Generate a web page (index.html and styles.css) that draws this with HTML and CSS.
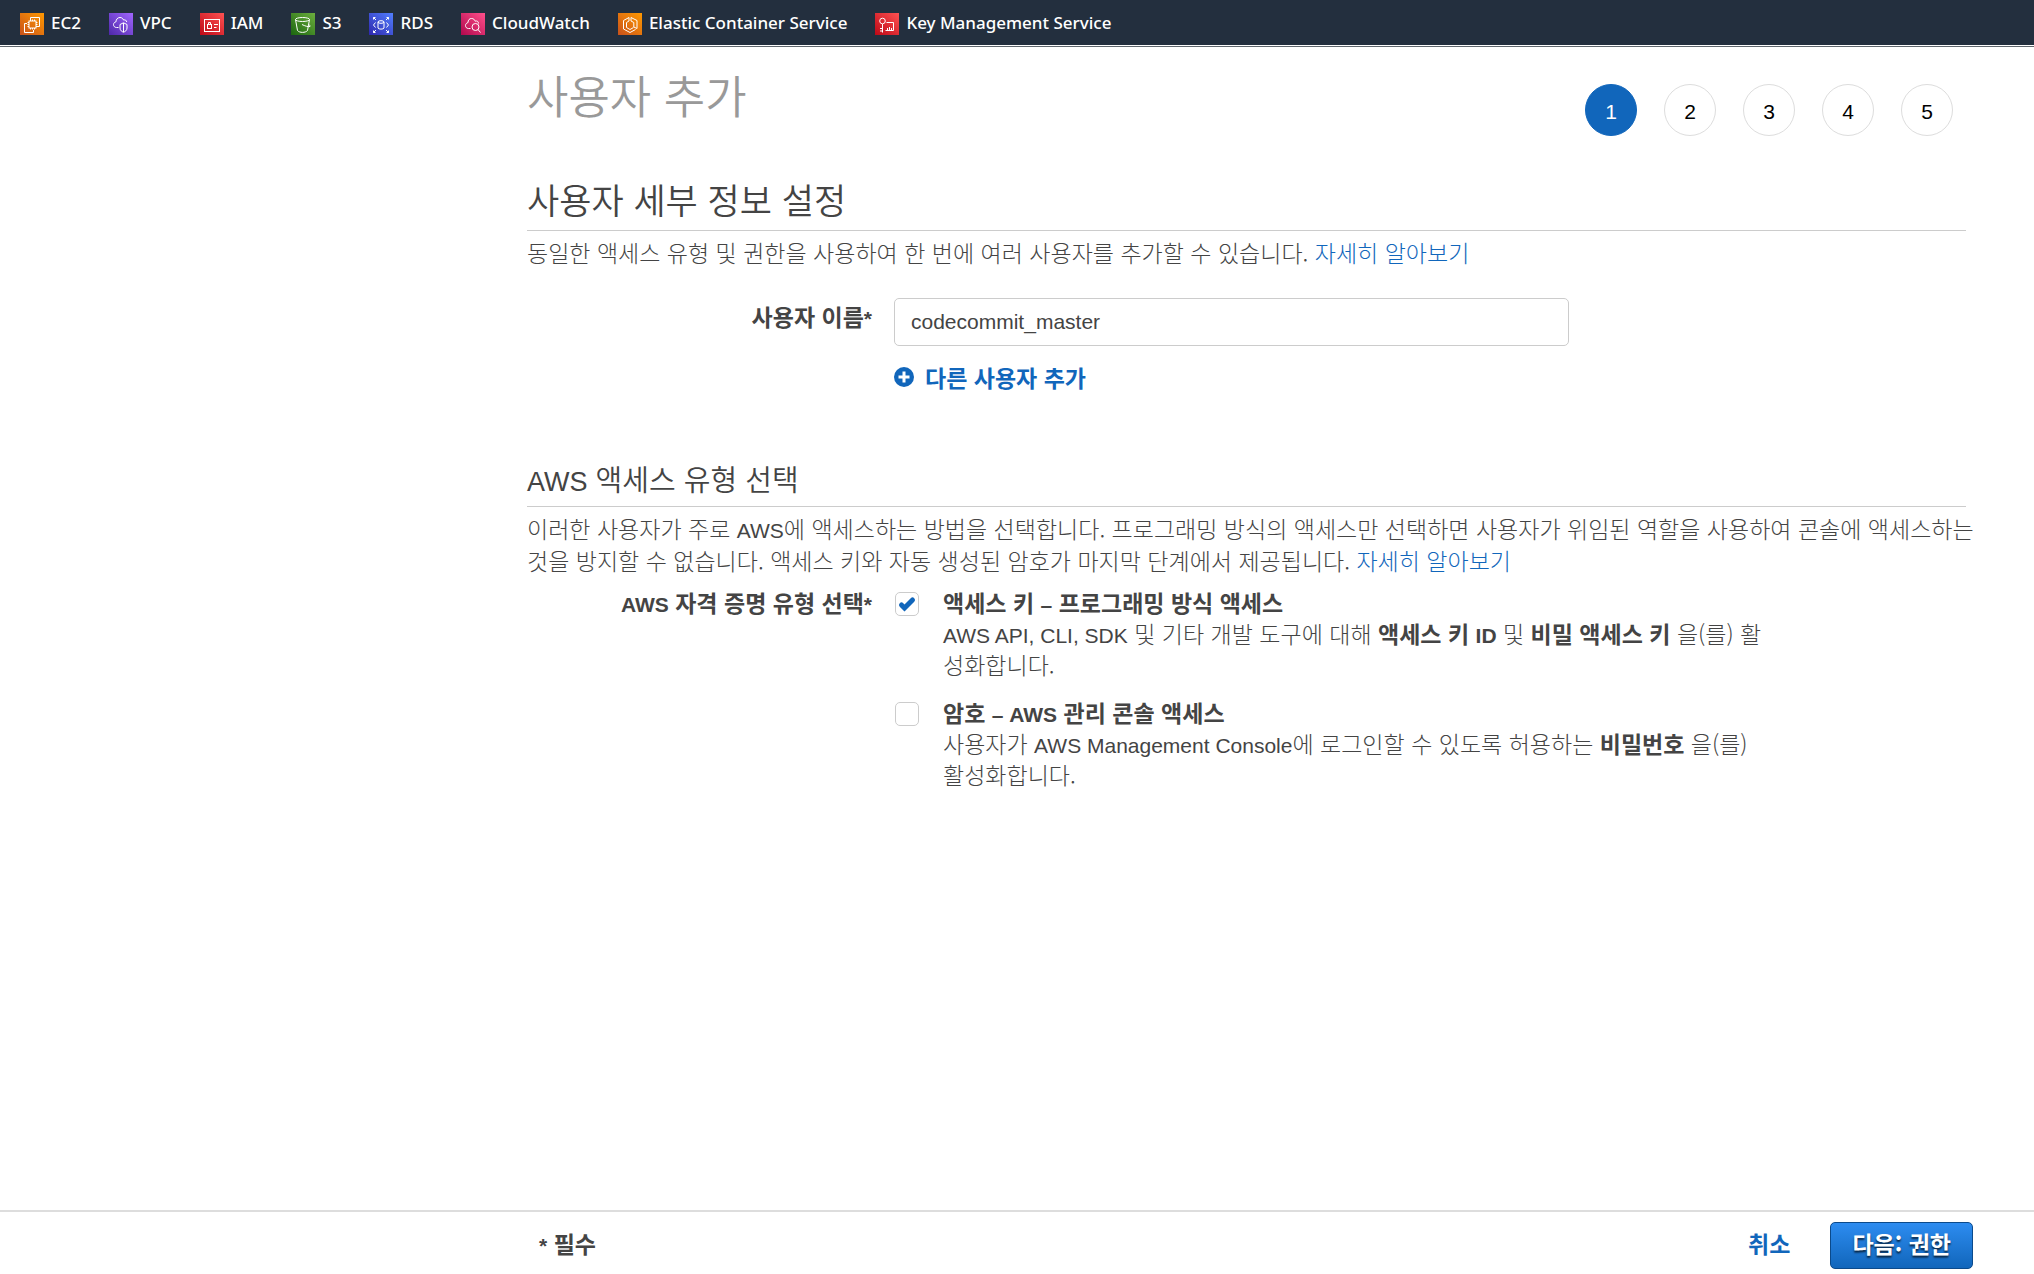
FILE: index.html
```html
<!DOCTYPE html>
<html lang="ko">
<head>
<meta charset="utf-8">
<meta name="viewport" content="width=device-width, initial-scale=1">
<title>IAM - 사용자 추가</title>
<link rel="stylesheet" href="styles.css">
</head>
<body>
<svg class="defs" width="0" height="0" aria-hidden="true">
  <defs>
    <linearGradient id="orange" x1="0" y1="1" x2="1" y2="0"><stop offset="0" stop-color="#c8511b"/><stop offset="1" stop-color="#ff9900"/></linearGradient>
    <linearGradient id="purple" x1="0" y1="1" x2="1" y2="0"><stop offset="0" stop-color="#4d27a8"/><stop offset="1" stop-color="#a166ff"/></linearGradient>
    <linearGradient id="red" x1="0" y1="1" x2="1" y2="0"><stop offset="0" stop-color="#bd0816"/><stop offset="1" stop-color="#ff5252"/></linearGradient>
    <linearGradient id="green" x1="0" y1="1" x2="1" y2="0"><stop offset="0" stop-color="#1b660f"/><stop offset="1" stop-color="#6cae3e"/></linearGradient>
    <linearGradient id="blue" x1="0" y1="1" x2="1" y2="0"><stop offset="0" stop-color="#2e27ad"/><stop offset="1" stop-color="#527fff"/></linearGradient>
    <linearGradient id="pink" x1="0" y1="1" x2="1" y2="0"><stop offset="0" stop-color="#b0084d"/><stop offset="1" stop-color="#ff4f8b"/></linearGradient>
  </defs>
</svg>
<nav class="favorites" aria-label="즐겨찾기">
  <a href="#ec2"><svg class="icon" viewBox="0 0 24 22"><rect class="tile" width="24" height="22" fill="url(#orange)"/><path d="M10.500 7V4.500H19.500V13.500H17M7 10.500H4.500V19.500H13.500V17"/><rect x="9" y="8" width="7" height="7"/><path d="M10.500 8V6.500M12.500 8V6.500M14.500 8V6.500M10.500 15V16.500M12.500 15V16.500M14.500 15V16.500M9 9.500H7.500M9 11.500H7.500M9 13.500H7.500M16 9.500H17.500M16 11.500H17.500M16 13.500H17.500"/></svg>EC2</a>
  <a href="#vpc"><svg class="icon" viewBox="0 0 24 22"><rect class="tile" width="24" height="22" fill="url(#purple)"/><path d="M9.500 14.500H7.500C5.500 14.500 4.500 13 4.500 11.700C4.500 10 5.800 9 7 8.800C7 6.500 8.500 4.500 11 4.500C12.800 4.500 14 5.500 14.500 7C16.500 6.500 17.500 7.500 17.700 9M11 11.500L14.500 9.800L18 11.500V15C18 17.500 16 18.700 14.500 19.200C13 18.700 11 17.500 11 15ZM14.500 10V19"/></svg>VPC</a>
  <a href="#iam"><svg class="icon" viewBox="0 0 24 22"><rect class="tile" width="24" height="22" fill="url(#red)"/><rect x="4.500" y="6.500" width="15" height="12"/><rect x="7.500" y="11.500" width="4" height="4"/><path d="M8.500 11.500V9.500H10.500V11.500M14 11.500H18M14 14.500H16.500"/></svg>IAM</a>
  <a href="#s3"><svg class="icon" viewBox="0 0 24 22"><rect class="tile" width="24" height="22" fill="url(#green)"/><ellipse cx="11.500" cy="6.500" rx="7" ry="2"/><path d="M4.500 6.500L6.500 17.500C8.500 20 14.500 20 16.500 17.500L18.500 6.500M11 11.500C14 13 17 14 19 13.500C19.500 12.500 18.500 12 17.500 11.500"/></svg>S3</a>
  <a href="#rds"><svg class="icon" viewBox="0 0 24 22"><rect class="tile" width="24" height="22" fill="url(#blue)"/><ellipse cx="12" cy="9" rx="3" ry="1.300"/><path d="M9 9V15C9.500 16.500 14.500 16.500 15 15V9M4.500 6.500V4.500H6.500M4.500 4.500L7 7M17.500 4.500H19.500V6.500M19.500 4.500L17 7M4.500 17.500V19.500H6.500M4.500 19.500L7 17M17.500 19.500H19.500V17.500M19.500 19.500L17 17M6.500 9.500L4.500 12L6.500 14.500M17.500 9.500L19.500 12L17.500 14.500"/></svg>RDS</a>
  <a href="#cloudwatch"><svg class="icon" viewBox="0 0 24 22"><rect class="tile" width="24" height="22" fill="url(#pink)"/><path d="M9.500 15.500H7.500C5.500 15.500 4.500 14 4.500 12.500C4.500 11 5.800 9.800 7 9.600C7 7 8.500 5.500 10.500 5.500C12.500 5.500 13.500 6.500 14.200 8.200C16 7.500 17.500 8.500 17.500 10.500M17 16.500L19.500 19.500"/><circle cx="14.500" cy="14" r="3.500"/></svg>CloudWatch</a>
  <a href="#ecs"><svg class="icon" viewBox="0 0 24 22"><rect class="tile" width="24" height="22" fill="url(#orange)"/><path d="M11 4.500L5.500 7.500V16L12 19.500L17.500 16.500M13 4.500L19 7.500V15.500L15.800 14V9.500L13 8V4.500M11 4.500V8L8.500 9.500V14.500L12 16.500L15.500 14.500"/></svg>Elastic Container Service</a>
  <a href="#kms"><svg class="icon" viewBox="0 0 24 22"><rect class="tile" width="24" height="22" fill="url(#red)"/><circle cx="7.500" cy="8" r="2.800"/><path d="M7.500 11V19.500M7.500 15.500H5M7.500 18H5M11.500 9.500H18.500V17.500H10.500M12.500 17V15M14.500 17V14M16.500 17V15"/></svg>Key Management Service</a>
</nav>

<main class="wizard">
  <header class="wizard-head">
    <h1>사용자 추가</h1>
    <ol class="steps">
      <li class="current" aria-current="step">1</li><li>2</li><li>3</li><li>4</li><li>5</li>
    </ol>
  </header>

  <section class="details">
    <h2>사용자 세부 정보 설정</h2>
    <p class="intro">동일한 액세스 유형 및 권한을 사용하여 한 번에 여러 사용자를 추가할 수 있습니다. <a href="#learn-users">자세히 알아보기</a></p>
    <div class="field username">
      <label class="field-label" for="username">사용자 이름<span class="en">*</span></label>
      <div class="field-body">
        <input class="text-input" id="username" type="text" value="codecommit_master">
        <button class="add-user" type="button"><svg class="plus" viewBox="0 0 20 20" aria-hidden="true"><circle cx="10" cy="10" r="10"/><path d="M10 4.500V15.500M4.500 10H15.500"/></svg>다른 사용자 추가</button>
      </div>
    </div>
  </section>

  <section class="access">
    <h3><span class="en">AWS</span> 액세스 유형 선택</h3>
    <p class="intro">이러한 사용자가 주로 <span class="en">AWS</span>에 액세스하는 방법을 선택합니다. 프로그래밍 방식의 액세스만 선택하면 사용자가 위임된 역할을 사용하여 콘솔에 액세스하는 것을 방지할 수 없습니다. 액세스 키와 자동 생성된 암호가 마지막 단계에서 제공됩니다. <a href="#learn-access">자세히 알아보기</a></p>
    <div class="field choices" role="group" aria-labelledby="credential-label">
      <div class="field-label" id="credential-label"><span class="en">AWS</span> 자격 증명 유형 선택<span class="en">*</span></div>
      <div class="field-body">
        <div class="choice">
          <input type="checkbox" id="access-key" checked>
          <div>
            <label for="access-key">액세스 키 <span class="en">–</span> 프로그래밍 방식 액세스</label>
            <p><span class="en">AWS API, CLI, SDK</span> 및 기타 개발 도구에 대해 <b>액세스 키 <span class="en">ID</span></b> 및 <b>비밀 액세스 키</b> 을(를) 활성화합니다.</p>
          </div>
        </div>
        <div class="choice">
          <input type="checkbox" id="password">
          <div>
            <label for="password">암호 <span class="en">– AWS</span> 관리 콘솔 액세스</label>
            <p>사용자가 <span class="en">AWS Management Console</span>에 로그인할 수 있도록 허용하는 <b>비밀번호</b> 을(를) 활성화합니다.</p>
          </div>
        </div>
      </div>
    </div>
  </section>
</main>

<footer class="actions">
  <span class="required"><span class="en">*</span> 필수</span>
  <button class="cancel" type="button">취소</button>
  <button class="next" type="button">다음: 권한</button>
</footer>
</body>
</html>
```
FILE: styles.css
```css
* { box-sizing: border-box; }

body {
  margin: 0;
  min-height: 100vh;
  display: flex;
  flex-direction: column;
  background: #fff;
  color: #444;
  font: 300 23px/32px "Noto Sans CJK KR", sans-serif;
}

h1, h2, h3, p, ol { margin: 0; padding: 0; font-weight: inherit; }
a { color: #1166bb; text-decoration: none; }
button { border: 0; padding: 0; background: none; color: #1166bb; font: inherit; font-weight: 700; cursor: pointer; }
b { font-weight: 700; }
.defs { position: absolute; }
.en { font-family: "Liberation Sans", sans-serif; font-size: 21px; line-height: 1; }

.favorites {
  display: flex;
  gap: 28px;
  height: 45px;
  padding: 1px 20px 0;
  background: #232f3e;
  box-shadow: 0 1px 0 #fff, 0 2px 0 #5f666d;
}
.favorites a {
  display: flex;
  align-items: center;
  gap: 7px;
  color: #fff;
  font: 500 17px/44px "Noto Sans", sans-serif;
  white-space: nowrap;
}
.icon { width: 24px; height: 22px; margin-top: 2px; fill: none; stroke: #fff; stroke-width: 1; }
.tile { stroke: none; }

.wizard { flex: 1; width: 100%; padding: 28px 68px 0 527px; }
.wizard-head { display: flex; justify-content: space-between; }
h1 { color: #999; font-size: 45px; line-height: 44px; font-weight: 350; }
.steps { display: flex; gap: 27px; padding: 11px 13px 0 0; list-style: none; }
.steps li {
  width: 52px;
  height: 52px;
  border: 1px solid #ddd;
  border-radius: 50%;
  color: #000;
  font: 21px/54px "Liberation Sans", sans-serif;
  text-align: center;
}
.steps .current { background: #1166bb; border-color: #1166bb; color: #fff; }

h2, h3 { border-bottom: 1px solid #ccc; font-weight: 350; }
h2 { margin-top: 36px; padding: 6px 0 10px; font-size: 35px; line-height: 42px; }
h3 { padding-bottom: 10px; font-size: 29px; line-height: 36px; }
h3 .en { font-size: 27px; }
.intro { margin-right: -14px; padding: 5px 0 2px; }

.field { display: grid; grid-template-columns: 345px minmax(0, 1fr); column-gap: 22px; }
.field-label { font-weight: 700; text-align: right; }
.username { padding-top: 28px; }
.username .field-label { padding-top: 2px; }
.text-input {
  display: block;
  width: 100%;
  max-width: 675px;
  height: 48px;
  padding: 0 16px;
  border: 1px solid #ccc;
  border-radius: 5px;
  color: #444;
  font: 21px "Liberation Sans", sans-serif;
}
.add-user { display: flex; align-items: center; gap: 11px; margin-top: 15px; }
.plus { width: 20px; height: 20px; fill: #1166bb; }
.plus path { stroke: #fff; stroke-width: 3; }

.access { padding-top: 67px; }
.choices { padding-top: 9px; line-height: 31px; }
.choice { display: grid; grid-template-columns: 25px minmax(0, 820px); column-gap: 24px; padding-bottom: 17px; }
.choice label { display: block; font-weight: 700; }
.choice input {
  appearance: none;
  width: 24px;
  height: 24px;
  margin: 5px 1px;
  border: 1px solid #ccc;
  border-radius: 5px;
  background: #fff;
}
.choice input:checked {
  background: url("data:image/svg+xml,%3Csvg xmlns='http://www.w3.org/2000/svg' viewBox='0 0 22 22'%3E%3Cpath d='M5.500 12L8.500 15L16.500 7' fill='none' stroke='%231166bb' stroke-width='5' stroke-linecap='round'/%3E%3C/svg%3E") center / 22px no-repeat;
}

.actions {
  display: flex;
  align-items: center;
  height: 64px;
  padding: 4px 61px 0 539px;
  border-top: 2px solid #ddd;
}
.required, .cancel { padding-bottom: 4px; font-weight: 700; }
.required { margin-right: auto; }
.next {
  height: 47px;
  margin-left: 40px;
  padding: 0 21px 4px;
  border: 1px solid #0b4a8b;
  border-radius: 5px;
  background: linear-gradient(#2d8cf0, #1166bb);
  color: #fff;
  text-shadow: 0 2px 2px rgba(0, 0, 0, 0.7);
}
```
